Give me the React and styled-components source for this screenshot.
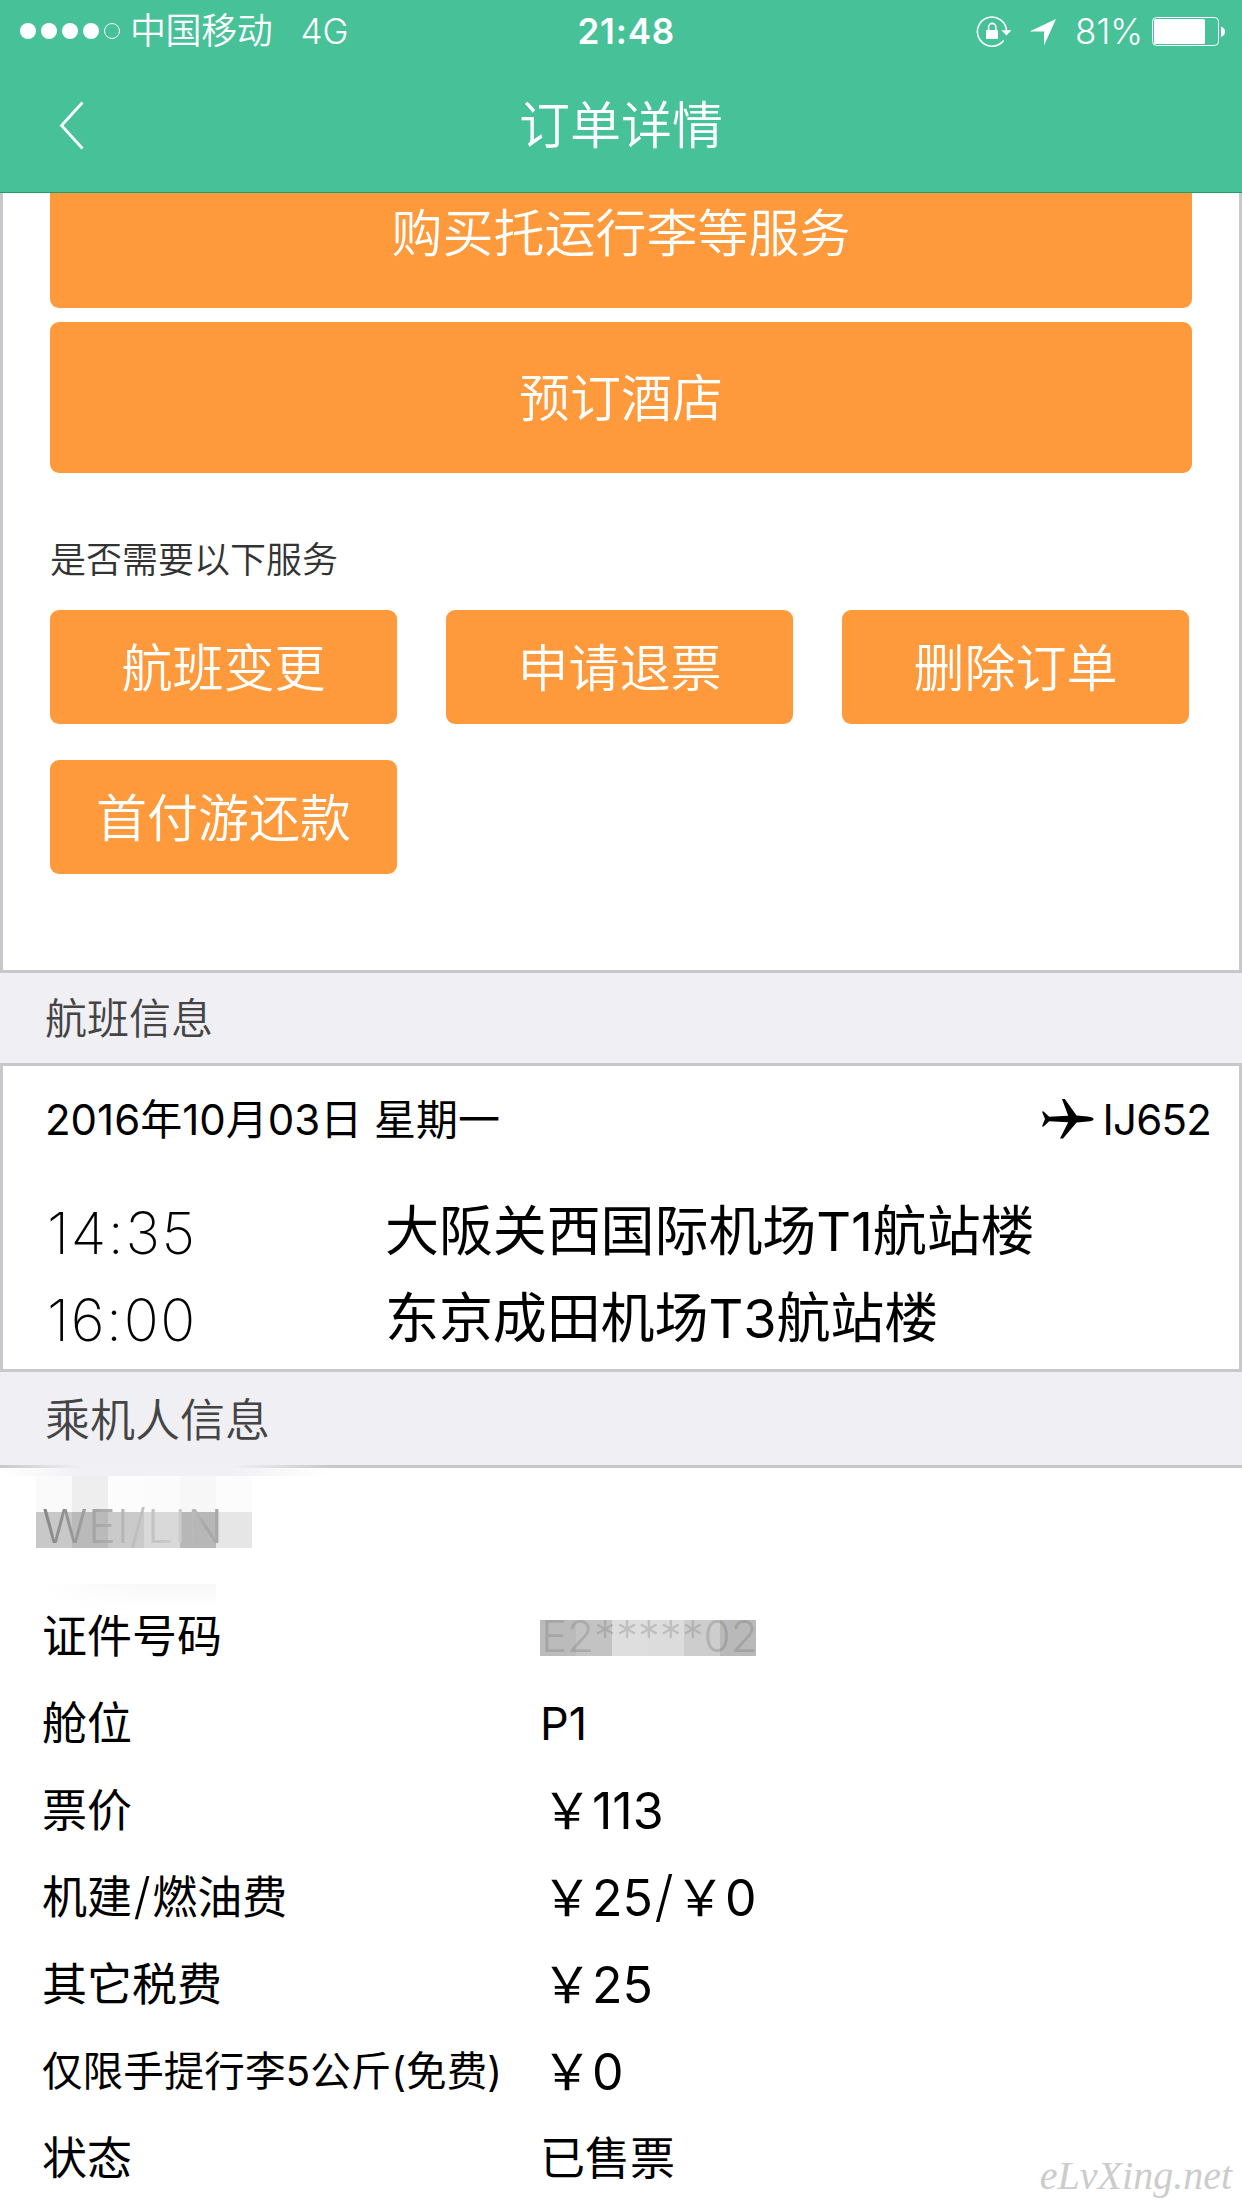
import React from 'react'
import styled, { createGlobalStyle } from 'styled-components'


const fees = [
    { label: '舱位', value: 'P1' },
    { label: '票价', value: '￥113', money: true },
    { label: '机建/燃油费', value: '￥25/￥0', money: true },
    { label: '其它税费', value: '￥25', money: true },
    { label: '仅限手提行李5公斤(免费)', value: '￥0', money: true, small: true },
    { label: '状态', value: '已售票' },
]

const services = ['航班变更', '申请退票', '删除订单', '首付游还款']

const flights = [
    { time: '14:35', airport: '大阪关西国际机场T1航站楼' },
    { time: '16:00', airport: '东京成田机场T3航站楼' },
]

const withSlash = (text) => {
    const [before, after] = text.split('/')
    return after ? <>{before}<Slash>/</Slash>{after}</> : text
}

function StatusIcons() {
    return (
        <svg width="252" height="34" viewBox="975 13 252 34">
            <g fill="none" stroke="#fff" strokeWidth="1.6">
                <path d="M1006.6 30 A14.6 14.6 0 1 0 1003.6 39" transform="translate(0 .5)" />
                <path d="M988.6 30 v-4 a3.6 3.6 0 0 1 7.2 0 v4" />
            </g>
            <g fill="#fff">
                <rect x="986" y="29" width="12" height="9" rx=".8" />
                <path d="M1001.4 29.2 h10 l-5 5.2z" />
                <path d="M1056 18 L1044 44.4 V30.6 H1029.5z" />
                <rect x="1154" y="18" width="51" height="25" rx="1.5" />
                <path d="M1221 25.5 q4 1.5 4 5.2 t-4 5.2z" />
            </g>
            <rect x="1152.5" y="16.5" width="66" height="28" rx="4" fill="none" stroke="#fff" />
        </svg>
    )
}

function Plane() {
    return (
        <svg width="52" height="40" viewBox="0 0 52 40">
            <path d="M0 12.6h1.6l5.6 5.2 19-1L20 0h2.8l11.8 16.6 11 .8c3.6.4 6 1.3 6 2.6s-2.4 2.2-6 2.6l-11 .9L21 39.4h-3l8.2-16.2-19-1-5.6 5.2H0l3-7.4z" />
        </svg>
    )
}

function App() {
    return (
        <Page>
            <GlobalStyle />
            <Header>
                <StatusBar>
                    <Carrier>
                        <Signal><i /><i /><i /><i /><i className="empty" /></Signal>
                        <span className="name">中国移动</span>
                        <span>4G</span>
                    </Carrier>
                    <Clock>21:48</Clock>
                    <Power>
                        <StatusIcons />
                        <span>81%</span>
                    </Power>
                </StatusBar>
                <NavBar>
                    <svg width="28" height="52" viewBox="0 0 28 52">
                        <path d="M25.5 2.5 L4.5 25.5 L25.5 48.5" fill="none" stroke="#fff" strokeWidth="2.8" />
                    </svg>
                    <h1>订单详情</h1>
                </NavBar>
            </Header>

            <ServicePanel>
                <WideButton $cut>购买托运行李等服务</WideButton>
                <WideButton>预订酒店</WideButton>
                <Question>是否需要以下服务</Question>
                <ServiceGrid>
                    {services.map((name) => <ServiceButton key={name}>{name}</ServiceButton>)}
                </ServiceGrid>
            </ServicePanel>

            <SectionTitle $height={93} $size={42} $line={92}>航班信息</SectionTitle>

            <FlightPanel>
                <FlightHead>
                    <span className="date">2016年10月03日 星期一</span>
                    <Plane />
                    <span className="number">IJ652</span>
                </FlightHead>
                {flights.map(({ time, airport }) => (
                    <FlightRow key={time}>
                        <Time>{time}</Time>
                        <Airport>{airport}</Airport>
                    </FlightRow>
                ))}
            </FlightPanel>

            <SectionTitle $height={96} $size={45} $line={97}>乘机人信息</SectionTitle>

            <Passenger>
                <NameRow>
                    <Haze />
                    <Mosaic>
                        {['#fafafa', '#eee', '#fcfcfc', '#fbfbfb', '#f7f7f7', '#fcfcfc',
                          '#c8c8c8', '#bababa', '#cacaca', '#d9d9d9', '#b7b7b7', '#e6e6e6'].map((c, i) => <Tile key={i} $color={c} />)}
                    </Mosaic>
                    <span>WEI/LIN</span>
                    <Smudge />
                </NameRow>
                <DetailRow>
                    <Label>证件号码</Label>
                    <Masked>E2*****02</Masked>
                </DetailRow>
                {fees.map(({ label, value, money, small }) => (
                    <DetailRow key={label}>
                        <Label $small={small}>{withSlash(label)}</Label>
                        <Value $money={money}>{withSlash(value)}</Value>
                    </DetailRow>
                ))}
                <Brand>eLvXing.net</Brand>
            </Passenger>
        </Page>
    )
}

const GlobalStyle = createGlobalStyle`
    * { box-sizing: border-box; }
    body {
        margin: 0;
        background: #fff;
    }
`;

const Page = styled.div`
    width: 1242px;
    height: 2208px;
    overflow: hidden;
    background: #fff;
    color: #000;
    font-family: Inter, "Noto Sans CJK SC", sans-serif;
    font-weight: 350;
    white-space: nowrap;
`;

const Header = styled.header`
    height: 193px;
    background: #47c197;
    border-bottom: 1px solid #229b68;
    color: #fff;
`;

const StatusBar = styled.div`
    display: grid;
    grid-template-columns: 1fr 100px 1fr;
    align-items: center;
    height: 60px;
    padding: 0 15px 0 20px;
    font-size: 36px;
    line-height: 62px;
`;

const Carrier = styled.div`
    display: flex;
    align-items: center;
    font-size: 35px;
    .name{
        margin: 0 28px 0 10px;
        font-size: 36px;
        letter-spacing: -.4px;
    }
`;

const Signal = styled.div`
    display: flex;
    gap: 5px;
    i{
        width: 16px;
        height: 16px;
        border-radius: 50%;
        background: #fff;
    }
    .empty{
        background: none;
        border: 1px solid #fff;
    }
`;

const Clock = styled.div`
    margin-left: 4px;
    font-size: 35px;
    font-weight: 600;
    letter-spacing: .8px;
    text-align: center;
`;

const Power = styled.div`
    display: grid;
    justify-content: end;
    align-items: center;
    svg, span{
        grid-area: 1 / 1;
    }
    span{
        padding-left: 100px;
        font-size: 35px;
    }
`;

const NavBar = styled.div`
    display: grid;
    grid-template-columns: 100px 1fr 100px;
    align-items: center;
    height: 132px;
    svg{
        margin-left: 57px;
    }
    h1{
        margin: 0;
        text-align: center;
        font-size: 51px;
        font-weight: 350;
        line-height: 132px;
    }
`;

const ServicePanel = styled.section`
    height: 780px;
    padding: 0 46px 0 47px;
    border: 3px solid #c8c7cc;
    border-top: 0;
`;

const WideButton = styled.button`
    display: block;
    width: 1142px;
    height: ${({ $cut }) => ($cut ? 115 : 151)}px;
    margin: 0 0 14px;
    padding: ${({ $cut }) => ($cut ? '0 0 34px' : '2px 0 0')};
    border: 0;
    border-radius: ${({ $cut }) => ($cut ? '0 0 9px 9px' : '9px')};
    background: #ff9a3c;
    color: #fff;
    font: inherit;
    font-size: 51px;
    line-height: 74px;
`;

const Question = styled.p`
    margin: 59px 0 22px;
    color: #333;
    font-size: 36px;
    line-height: 56px;
`;

const ServiceGrid = styled.div`
    display: grid;
    grid-template-columns: repeat(3, 347px);
    gap: 36px 49px;
`;

const ServiceButton = styled.button`
    height: 114px;
    padding: 3px 0 0;
    border: 0;
    border-radius: 9px;
    background: #ff9a3c;
    color: #fff;
    font: inherit;
    font-size: 51px;
    line-height: 74px;
`;

const SectionTitle = styled.h2`
    height: ${({ $height }) => $height}px;
    margin: 0;
    padding-left: 45px;
    background: #efeff4;
    border-bottom: 3px solid #c8c7cc;
    color: #444;
    font-size: ${({ $size }) => $size}px;
    font-weight: 350;
    line-height: ${({ $line }) => $line}px;
`;

const FlightPanel = styled.section`
    height: 306px;
    border: 3px solid #c8c7cc;
    border-top: 0;
`;

const FlightHead = styled.div`
    display: flex;
    align-items: center;
    height: 122px;
    padding: 0 28px 14px 42px;
    font-size: 42px;
    font-weight: 370;
    line-height: 60px;
    .date{
        flex: 1;
        padding-bottom: 1px;
    }
    svg{
        margin-bottom: 2px;
    }
    .number{
        margin-left: 9px;
        letter-spacing: -.8px;
    }
`;

const FlightRow = styled.div`
    display: grid;
    grid-template-columns: 340px 1fr;
    align-items: center;
    height: 87px;
    padding-left: 42px;
    line-height: 87px;
`;

const Time = styled.span`
    padding: 3px 0 0 2px;
    font-size: 58px;
    font-weight: 150;
    line-height: 84px;
    letter-spacing: 1.6px;
`;

const Airport = styled.span`
    font-size: 54px;
    font-weight: 370;
    letter-spacing: -.1px;
`;

const Passenger = styled.section`
    position: relative;
    height: 740px;
    padding-left: 42px;
`;

const NameRow = styled.div`
    position: relative;
    height: 125px;
    padding-top: 28px;
    font-size: 47px;
    line-height: 60px;
    letter-spacing: .7px;
    span{
        position: relative;
        background: linear-gradient(90deg, #858585, #a6a6a6 30%, #bdbdbd 50%, #cdcdcd 75%, #a8a8a8 90%);
        -webkit-background-clip: text;
        color: transparent;
    }
`;

/* the smear that the mosaic leaves over the section border */
const Haze = styled.div`
    position: absolute;
    left: -42px;
    top: -5px;
    width: 330px;
    height: 13px;
    background: linear-gradient(90deg, transparent, #f1f1f5 25%, #f1f1f5 70%, transparent);
`;

const Mosaic = styled.div`
    position: absolute;
    left: -6px;
    top: 8px;
    display: grid;
    grid-template-columns: repeat(6, 36px);
`;

const Tile = styled.div`
    height: 36px;
    background: ${({ $color }) => $color};
`;

const Smudge = styled.div`
    position: absolute;
    left: 0;
    top: 116px;
    width: 174px;
    height: 24px;
    background: linear-gradient(90deg, #fff, transparent 60%), linear-gradient(#f7f7f7, #fff);
`;

const DetailRow = styled.div`
    position: relative;
    display: grid;
    grid-template-columns: 498px 1fr;
    align-items: center;
    height: 87px;
    line-height: 86px;
`;

const Label = styled.span`
    font-size: ${({ $small }) => ($small ? 40.6 : 45)}px;
    font-weight: 370;
`;

const Slash = styled.i`
    margin: 0 1.5px;
    font-size: 1.1em;
    font-style: normal;
    font-weight: 300;
    line-height: 1;
`;

const Value = styled.span`
    padding-left: ${({ $money }) => ($money ? 2 : 0)}px;
    font-size: ${({ $money }) => ($money ? 50 : 45)}px;
    font-weight: 370;
`;

const Masked = styled.span`
    width: 216px;
    height: 36px;
    margin-top: 2px;
    padding-left: 1px;
    background: linear-gradient(90deg, #bbb 0 36px, #c3c3c3 36px 72px, #dedede 72px 108px, #dcdcdc 108px 144px, #cdcdcd 144px 180px, #b9b9b9 180px);
    color: rgba(110, 110, 110, .3);
    font-size: 44px;
    line-height: 33px;
    letter-spacing: -.1px;
`;

const Brand = styled.div`
    position: absolute;
    right: 10px;
    bottom: 8px;
    color: #ccc;
    font: italic 40px/48px "Liberation Serif", serif;
`;


export default App
